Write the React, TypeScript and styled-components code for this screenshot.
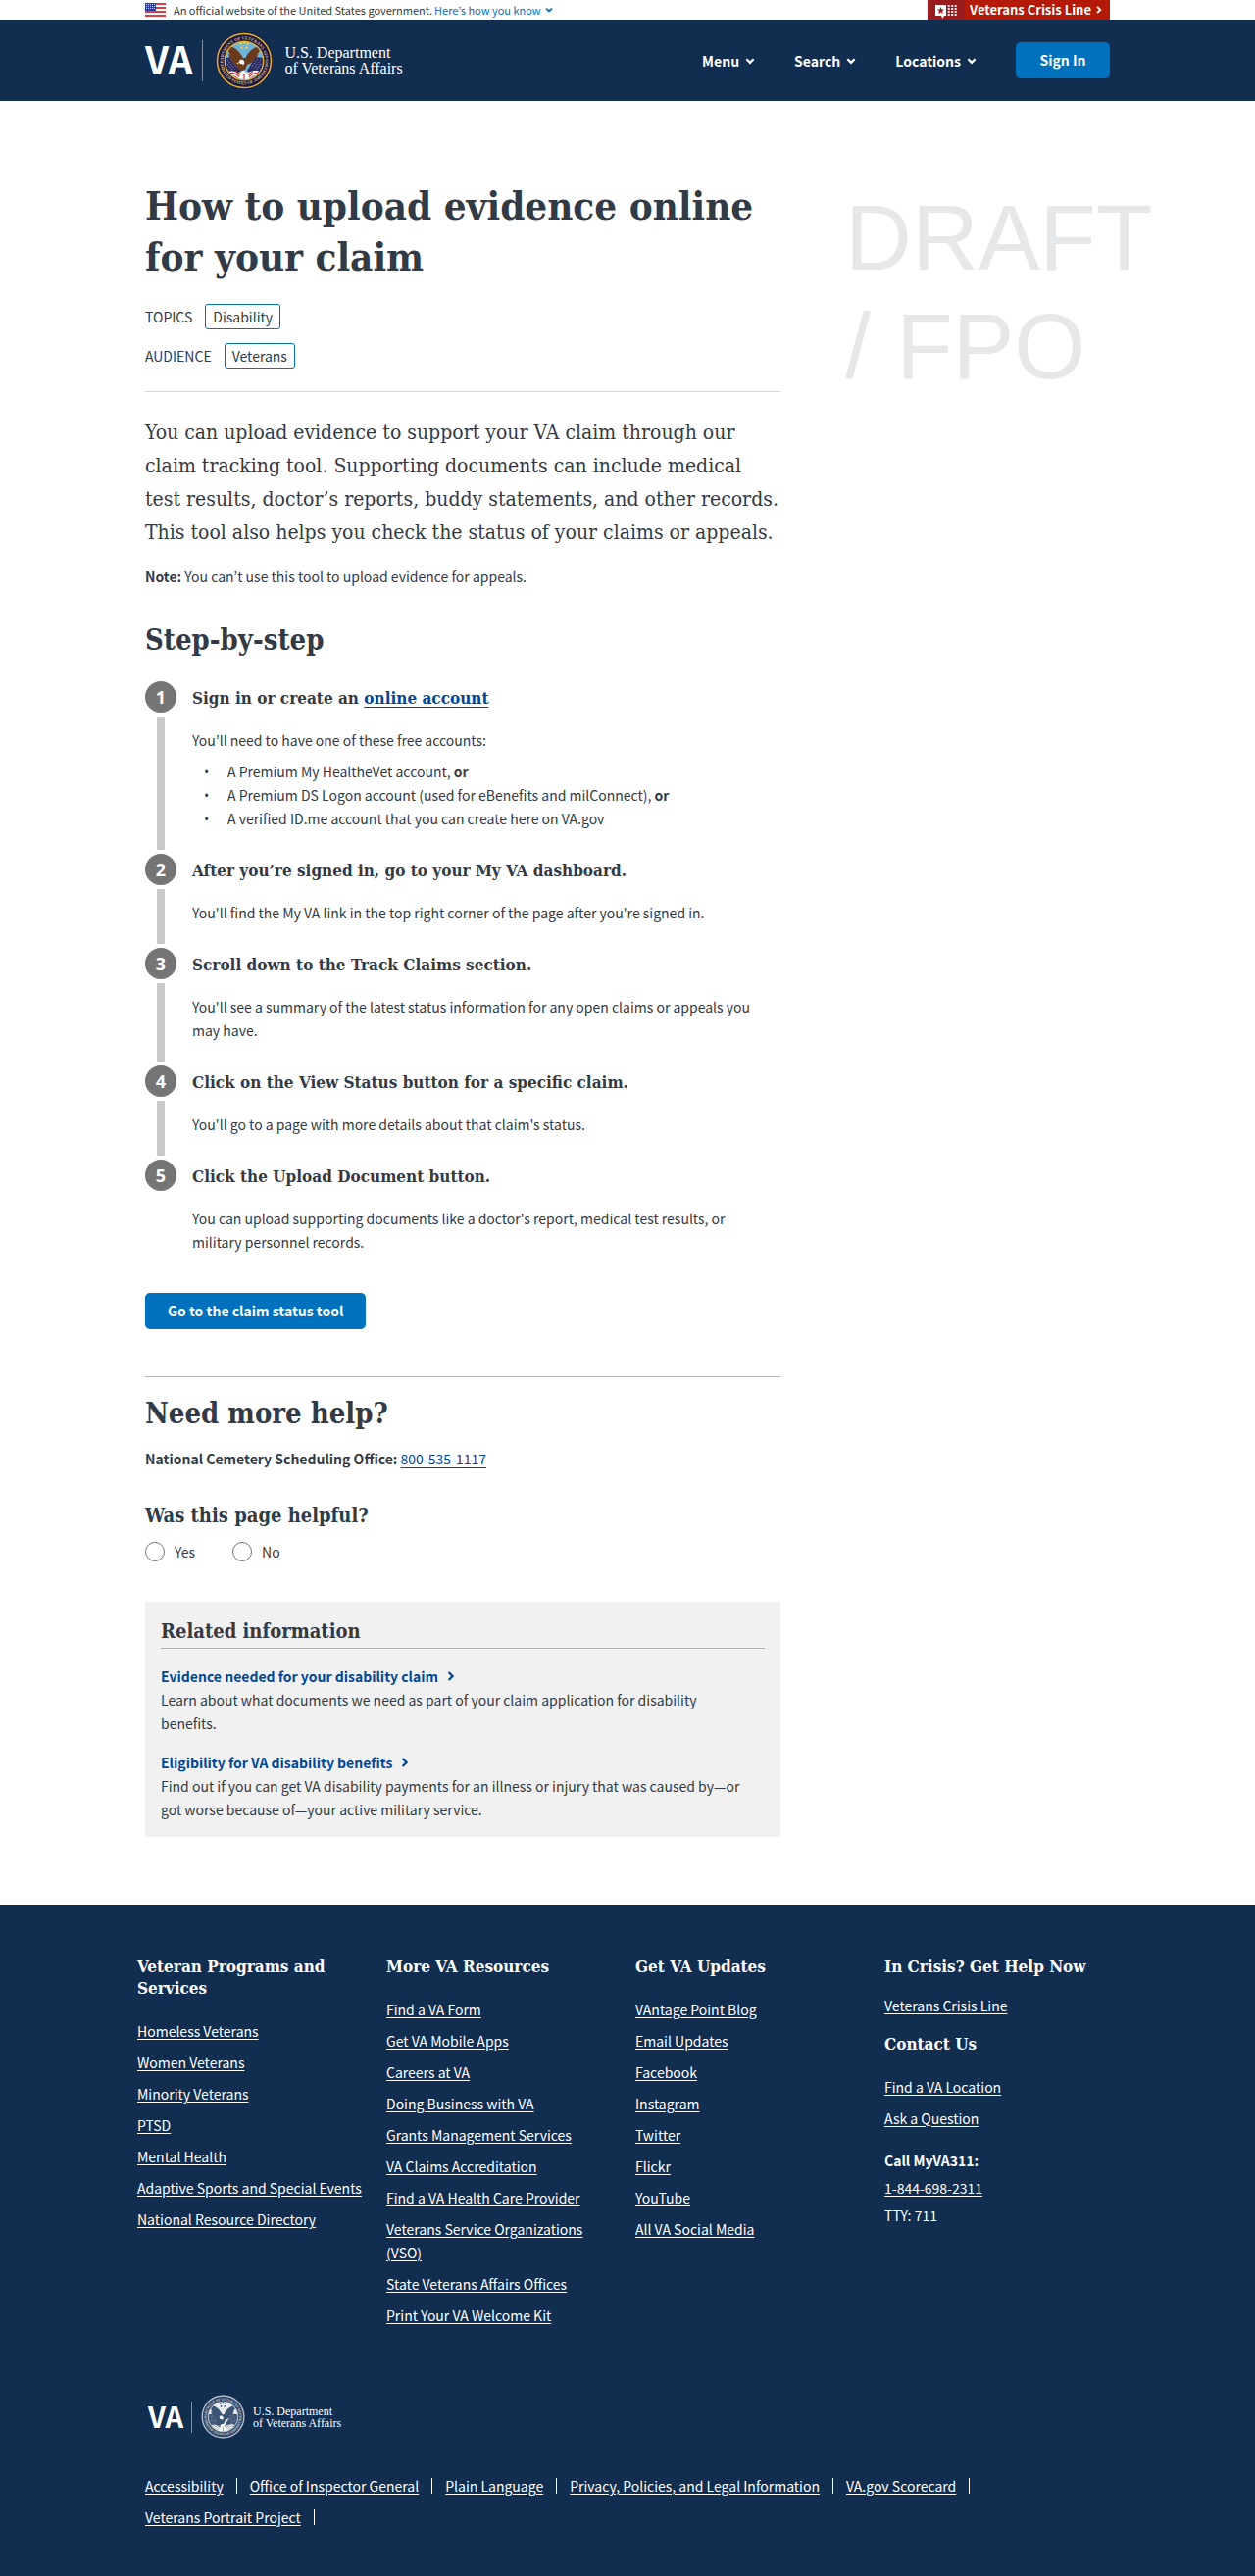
import React from "react";
import styled, { createGlobalStyle } from "styled-components";

const sans = `"Noto Sans CJK KR", "Open Sans", sans-serif`;
const slab = `"DejaVu Serif Condensed", "DejaVu Serif", serif`;
const navy = "#112e51";
const ink = "#323a45";
const blue = "#0071bc";
const linkBlue = "#004795";

const GlobalStyle = createGlobalStyle`
  *, *::before, *::after { box-sizing: border-box; }
  body {
    margin: 0;
    background: #fff;
    color: ${ink};
    font: 14px/24px ${sans};
  }
  h1, h2, h3, p, ul, ol, fieldset { margin: 0; padding: 0; border: 0; }
  ul, ol { list-style: none; }
  button { font-family: inherit; cursor: pointer; }
`;

const Container = styled.div`
  max-width: 1024px;
  margin: 0 auto;
  padding: 0 20px;
`;

/* ---------- government banner ---------- */

const Banner = styled(Container)`
  display: flex;
  justify-content: space-between;
  height: 20px;
`;

const Official = styled.div`
  display: flex;
  align-items: center;
  font-size: 11px;
  line-height: 20px;
`;

const Flag = styled.svg`
  width: 21px;
  height: 14px;
  margin-right: 8px;
`;

const HowLink = styled.button`
  display: flex;
  align-items: center;
  gap: 4px;
  margin-left: 2px;
  padding: 0;
  border: 0;
  background: none;
  color: ${blue};
  font-size: 11px;
  line-height: 20px;
`;

const CrisisLink = styled.a`
  display: flex;
  background: #b31a08;
  color: #fff;
  font-size: 13px;
  font-weight: 700;
  line-height: 20px;
  text-decoration: none;
`;

const CrisisIcon = styled.span`
  display: flex;
  width: 38px;
  justify-content: center;
  background: #981b1e;
`;

const CrisisText = styled.span`
  display: flex;
  align-items: center;
  gap: 4px;
  padding: 0 7px 0 5px;
`;

/* ---------- header ---------- */

const Header = styled.header`
  background: ${navy};
  color: #fff;
`;

const HeaderRow = styled(Container)`
  display: flex;
  align-items: center;
  justify-content: space-between;
  height: 83px;
`;

const Logo = styled.a<{ $small?: boolean }>`
  display: flex;
  align-items: center;
  color: #fff;
  text-decoration: none;
  padding-left: ${(p) => (p.$small ? 3 : 0)}px;
`;

const Initials = styled.span<{ $small?: boolean }>`
  padding-bottom: ${(p) => (p.$small ? 4 : 6)}px;
  font-size: ${(p) => (p.$small ? 29 : 39)}px;
  line-height: ${(p) => (p.$small ? 40 : 52)}px;
  font-weight: 700;
`;

const Divider = styled.span<{ $small?: boolean }>`
  width: 1px;
  height: ${(p) => (p.$small ? 32 : 42)}px;
  margin: ${(p) => (p.$small ? "0 9px 0 8px" : "0 13px 0 10px")};
  background: #7f8fa4;
`;

const Department = styled.span<{ $small?: boolean }>`
  margin-left: ${(p) => (p.$small ? 8 : 12)}px;
  font-family: "Liberation Serif", serif;
  font-size: ${(p) => (p.$small ? 12 : 16)}px;
  line-height: ${(p) => (p.$small ? 12 : 16)}px;
`;

const Nav = styled.nav`
  display: flex;
  align-items: center;
  gap: 40px;
`;

const NavButton = styled.button`
  display: flex;
  align-items: center;
  gap: 6px;
  padding: 0;
  border: 0;
  background: none;
  color: #fff;
  font-size: 14px;
  font-weight: 700;
  line-height: 24px;
`;

const PrimaryButton = styled.button`
  min-width: 96px;
  padding: 0 23px;
  border: 0;
  border-radius: 5px;
  background: ${blue};
  color: #fff;
  font-size: 14px;
  font-weight: 700;
  line-height: 37px;
`;

/* ---------- article ---------- */

const Layout = styled(Container)`
  display: grid;
  grid-template-columns: 12fr 5fr;
  column-gap: 66px;
  padding-top: 81px;
  padding-bottom: 69px;
`;

const Article = styled.main`
  min-width: 0;
`;

const Watermark = styled.aside`
  min-width: 0;
  padding-top: 3px;
  color: #e6e7e9;
  font: 94px/111px "Liberation Sans", sans-serif;
`;

const Title = styled.h1`
  margin-bottom: 22px;
  font: 700 40px/52px ${slab};
`;

const TagRow = styled.div`
  display: flex;
  align-items: center;
  gap: 13px;
  height: 26px;

  & + & {
    margin-top: 14px;
  }
`;

const Tag = styled.a`
  padding: 0 7px;
  border: 1px solid ${blue};
  border-radius: 3px;
  color: ${ink};
  text-decoration: none;
`;

const Rule = styled.hr<{ $dark?: boolean }>`
  height: 1px;
  margin: ${(p) => (p.$dark ? "48px 0 17px" : "23px 0 24px")};
  border: 0;
  background: ${(p) => (p.$dark ? "#aeb0b5" : "#d6d7d9")};
`;

const Intro = styled.p`
  margin-bottom: 16px;
  font: 21px/34px ${slab};
`;

const Section = styled.h2`
  font: 700 29px/40px ${slab};
`;

const StepsHeading = styled(Section)`
  margin-top: 33px;
`;

const SmallHeading = styled.h3`
  font: 700 20px/28px ${slab};
`;

const InlineLink = styled.a`
  color: ${linkBlue};
  text-underline-offset: 3px;
`;

const Steps = styled.ol`
  margin: 22px 0 16px;
`;

const Step = styled.li`
  display: grid;
  grid-template-columns: 32px 1fr;
  column-gap: 16px;
`;

const Marker = styled.div`
  display: flex;
  flex-direction: column;
  align-items: center;
`;

const StepNumber = styled.span`
  width: 32px;
  border-radius: 50%;
  background: #757575;
  color: #fff;
  font: 700 18px/32px "Open Sans", sans-serif;
  text-align: center;
`;

const Track = styled.span`
  flex: 1;
  width: 8px;
  margin: 4px 0;
  background: #cacaca;
`;

const StepTitle = styled.h3`
  margin-bottom: 14px;
  font: 700 17px/34px ${slab};
`;

const StepBody = styled.div`
  padding: 0 10px 24px 0;
`;

const Bullets = styled.ul`
  margin-top: 8px;
  padding-left: 36px;

  li::before {
    content: "•";
    display: inline-block;
    width: 24px;
    margin-left: -24px;
    font-family: "Open Sans", sans-serif;
    line-height: 20px;
  }
`;

const HelpPara = styled.p`
  margin: 14px 0 32px;
`;

const Choices = styled.fieldset`
  display: flex;
  gap: 38px;
  margin-top: 11px;
`;

const Choice = styled.label`
  display: flex;
  align-items: center;
  gap: 10px;
`;

const Radio = styled.input`
  appearance: none;
  width: 20px;
  height: 20px;
  margin: 0;
  border: 1px solid #757575;
  border-radius: 50%;
  background: #fff;

  &:checked {
    background: ${blue};
    box-shadow: inset 0 0 0 3px #fff;
  }
`;

const Related = styled.section`
  margin-top: 39px;
  padding: 16px;
  background: #f1f1f1;
`;

const RelatedHeading = styled(SmallHeading)`
  padding-bottom: 3px;
  border-bottom: 1px solid #aeb0b5;
`;

const RelatedItem = styled.div`
  margin-top: 16px;
  padding-right: 16px;
`;

const RelatedLink = styled.a`
  display: flex;
  align-items: center;
  gap: 8px;
  color: ${linkBlue};
  font-weight: 700;
  text-decoration: none;
`;

/* ---------- footer ---------- */

const Footer = styled.footer`
  padding: 52px 0 48px;
  background: ${navy};
  color: #fff;
`;

const FooterGrid = styled.div`
  display: grid;
  grid-template-columns: repeat(4, 1fr);
  margin: 0 -24px 0 -8px;
`;

const FooterColumn = styled.div`
  padding-right: 16px;
`;

const FooterHeading = styled.h2`
  margin-bottom: 21px;
  font: 700 17px/22px ${slab};

  p + & {
    margin-top: 16px;
  }
`;

const FooterLinks = styled.ul`
  display: grid;
  gap: 8px;
`;

const FooterLink = styled.a`
  color: #fff;
  text-underline-offset: 2px;
`;

const CrisisPara = styled.p`
  margin-top: -4px;
`;

const Phone = styled.div`
  display: grid;
  margin-top: 17px;
  line-height: 28px;
`;

const FooterBrand = styled.div`
  display: flex;
  margin-top: 69px;
`;

const LegalLinks = styled.ul`
  display: flex;
  flex-wrap: wrap;
  row-gap: 8px;
  max-width: 900px;
  margin-top: 36px;

  li {
    display: flex;
    align-items: center;
  }
  li::after {
    content: "";
    width: 1px;
    height: 16px;
    margin: 0 13px;
    background: #fff;
  }
`;

/* ---------- drawings ---------- */

const ChevronDown = ({ size }: { size: number }) => (
  <svg width={size} height={size} viewBox="0 0 10 10" aria-hidden="true">
    <path d="M1.400 3.200L5 6.800l3.600-3.600" fill="none" stroke="currentColor" strokeWidth="2.300" />
  </svg>
);

const ChevronRight = ({ size }: { size: number }) => (
  <svg width={size} height={size} viewBox="0 0 10 10" aria-hidden="true">
    <path d="M2.600 1L6.600 5l-4 4" fill="none" stroke="currentColor" strokeWidth="2.300" />
  </svg>
);

const UsFlag = () => (
  <Flag viewBox="0 0 21 14" aria-hidden="true">
    <rect width="21" height="14" fill="#fff" />
    {[0, 4, 8, 12].map((y) => (
      <rect key={y} y={y} width="21" height="2" fill="#db3e42" />
    ))}
    <rect width="11" height="8" fill="#2c3e9e" />
    {[1, 3, 5].map((y) =>
      [1, 3, 5, 7, 9].map((x) => (
        <rect key={`${x}-${y}`} x={x} y={y} width="1" height="1" fill="#c3cbef" />
      ))
    )}
  </Flag>
);

const CrisisMark = () => (
  <svg width="23" height="20" viewBox="0 0 23 20" aria-hidden="true">
    <path fill="#fff" d="M0 5h11v11l-2 0-1.500 3-1.500-3H0z" />
    <path
      fill="#981b1e"
      d="M5.500 7l1 2.600h2.700l-2.200 1.700.8 2.700-2.300-1.600L3.200 14l.8-2.700L1.800 9.600h2.700z"
    />
    {[5, 8, 11, 14].map((y) =>
      [12.500, 16, 19.500].map((x) => (
        <rect key={`${x}-${y}`} x={x} y={y} width="2.400" height="2" rx="1" fill="#fff" />
      ))
    )}
  </svg>
);

const SealSvg = styled.svg`
  flex: none;
  overflow: visible;
`;

type SealProps = { id: string; size: number; mono?: boolean };

const Seal = ({ id, size, mono }: SealProps) => {
  const c = mono
    ? { rim: "#b9c4d2", ring: "#31496a", text: "#c9d2dd", sky: "#e9edf2", bird: "#3c5473", head: "#fff", red: "#8a99ad", field: "#3c5473", star: "#31496a" }
    : { rim: "#e6b42c", ring: "#1c1746", text: "#d9bd6a", sky: "#6fb4d8", bird: "#6b3a1c", head: "#fff", red: "#c03a4c", field: "#2a2b63", star: "#f2d14a" };
  return (
    <SealSvg width={size} height={size} viewBox="0 0 116 116" role="img" aria-label="Seal">
      <defs>
        <path id={`${id}-top`} d="M22.600 82.500A43 43 0 1 1 93.400 82.500" />
        <path id={`${id}-bottom`} d="M11.500 75A50 50 0 0 0 104.500 75" />
        <clipPath id={`${id}-disc`}>
          <circle cx="58" cy="58" r="38" />
        </clipPath>
      </defs>
      <circle cx="58" cy="58" r="58" fill={c.ring} />
      <circle cx="58" cy="58" r="55" fill="none" stroke={c.rim} strokeWidth="3" />
      <circle cx="58" cy="58" r="39.500" fill={c.sky} stroke={c.rim} strokeWidth="2.500" />
      <g fill={c.text} fontFamily="Liberation Serif, serif" fontWeight="700" fontSize="9">
        <text textAnchor="middle">
          <textPath href={`#${id}-top`} startOffset="50%">DEPARTMENT OF VETERANS AFFAIRS</textPath>
        </text>
        <text textAnchor="middle">
          <textPath href={`#${id}-bottom`} startOffset="50%">UNITED STATES OF AMERICA</textPath>
        </text>
      </g>
      <g clipPath={`url(#${id}-disc)`}>
        <path fill={c.field} d="M19 52l16-2 17 28-14 12-20-14zM97 52l-16-2-17 28 14 12 20-14z" />
        <g stroke={c.head} strokeWidth="1.500" strokeDasharray="1.500 3">
          <path d="M25 57l14 18M31 55l13 17M24 64l10 13M91 57L77 75M85 55L72 72M92 64L82 77" />
        </g>
        <path fill={c.head} d="M26 80c10-2 16 0 22 5l8-9 8 8c8-6 14-7 24-5L78 96H40z" />
        <g stroke={c.red} strokeWidth="2.500" fill="none">
          <path d="M28 83c9-2 14 1 20 8M33 89c6 0 9 2 13 6M88 83c-9-2-14 1-20 8M83 89c-6 0-9 2-13 6M40 79l10 8M76 79l-10 8M58 84v12" />
        </g>
        <path
          fill={c.bird}
          d="M27 29c8 0 18 5 25 17l4 6h5c5-13 16-22 31-24-1 8-3 13-8 17l3-1c-3 7-7 11-12 13l3 0c-5 6-9 8-13 8l-5 11-8 3-7-5-2-9c-5 0-9-4-12-9l4 1c-5-4-8-8-9-13l4 2c-4-6-5-11-3-17z"
        />
        <path fill={c.head} d="M48 59c1-4 6-5 9-2l2 5-3 5-2-3c-3 1-6 0-6-5z" />
        <path fill={c.star} d="M46 60l-3 3 1 2 4-3zM50 80l-3 5h4zM63 79l3 5h-4z" />
      </g>
      <g fill={c.star}>
        {[[51, 23], [58, 21], [65, 23], [53, 31], [63, 31]].map(([x, y]) => (
          <path
            key={`${x}-${y}`}
            transform={`translate(${x} ${y})`}
            d="M0-3.500l1 2.400h2.500L1.500.5l.8 2.500L0 1.500-2.300 3l.8-2.500-2-1.600H-1z"
          />
        ))}
      </g>
    </SealSvg>
  );
};

const Brand = ({ small }: { small?: boolean }) => (
  <Logo href="#home" $small={small}>
    <Initials $small={small}>VA</Initials>
    <Divider $small={small} />
    <Seal id={small ? "footer-seal" : "header-seal"} size={small ? 45 : 58} mono={small} />
    <Department $small={small}>
      U.S. Department
      <br />
      of Veterans Affairs
    </Department>
  </Logo>
);

/* ---------- content ---------- */

const steps: { title: React.ReactNode; body: React.ReactNode }[] = [
  {
    title: (
      <>
        Sign in or create an <InlineLink href="#account">online account</InlineLink>
      </>
    ),
    body: (
      <>
        <p>You’ll need to have one of these free accounts:</p>
        <Bullets>
          <li>A Premium My HealtheVet account, <b>or</b></li>
          <li>A Premium DS Logon account (used for eBenefits and milConnect), <b>or</b></li>
          <li>A verified ID.me account that you can create here on VA.gov</li>
        </Bullets>
      </>
    ),
  },
  {
    title: "After you’re signed in, go to your My VA dashboard.",
    body: <p>You'll find the My VA link in the top right corner of the page after you're signed in.</p>,
  },
  {
    title: "Scroll down to the Track Claims section.",
    body: <p>You'll see a summary of the latest status information for any open claims or appeals you may have.</p>,
  },
  {
    title: "Click on the View Status button for a specific claim.",
    body: <p>You'll go to a page with more details about that claim's status.</p>,
  },
  {
    title: "Click the Upload Document button.",
    body: <p>You can upload supporting documents like a doctor's report, medical test results, or military personnel records.</p>,
  },
];

const related = [
  {
    title: "Evidence needed for your disability claim",
    text: "Learn about what documents we need as part of your claim application for disability benefits.",
  },
  {
    title: "Eligibility for VA disability benefits",
    text: "Find out if you can get VA disability payments for an illness or injury that was caused by—or got worse because of—your active military service.",
  },
];

const footerColumns = [
  {
    heading: "Veteran Programs and Services",
    links: ["Homeless Veterans", "Women Veterans", "Minority Veterans", "PTSD", "Mental Health", "Adaptive Sports and Special Events", "National Resource Directory"],
  },
  {
    heading: "More VA Resources",
    links: ["Find a VA Form", "Get VA Mobile Apps", "Careers at VA", "Doing Business with VA", "Grants Management Services", "VA Claims Accreditation", "Find a VA Health Care Provider", "Veterans Service Organizations (VSO)", "State Veterans Affairs Offices", "Print Your VA Welcome Kit"],
  },
  {
    heading: "Get VA Updates",
    links: ["VAntage Point Blog", "Email Updates", "Facebook", "Instagram", "Twitter", "Flickr", "YouTube", "All VA Social Media"],
  },
];

const legal = ["Accessibility", "Office of Inspector General", "Plain Language", "Privacy, Policies, and Legal Information", "VA.gov Scorecard", "Veterans Portrait Project"];

const LinkList = ({ links }: { links: string[] }) => (
  <FooterLinks>
    {links.map((label) => (
      <li key={label}>
        <FooterLink href="#footer">{label}</FooterLink>
      </li>
    ))}
  </FooterLinks>
);

export default function App() {
  return (
    <>
      <GlobalStyle />
      <Banner>
        <Official>
          <UsFlag />
          An official website of the United States government.
          <HowLink type="button">
            Here’s how you know <ChevronDown size={8} />
          </HowLink>
        </Official>
        <CrisisLink href="#crisis">
          <CrisisIcon><CrisisMark /></CrisisIcon>
          <CrisisText>
            Veterans Crisis Line <ChevronRight size={8} />
          </CrisisText>
        </CrisisLink>
      </Banner>

      <Header>
        <HeaderRow>
          <Brand />
          <Nav aria-label="Main">
            {["Menu", "Search", "Locations"].map((label) => (
              <NavButton key={label} type="button">
                {label} <ChevronDown size={10} />
              </NavButton>
            ))}
            <PrimaryButton type="button">Sign In</PrimaryButton>
          </Nav>
        </HeaderRow>
      </Header>

      <Layout>
        <Article>
          <Title>How to upload evidence online for your claim</Title>
          <TagRow>TOPICS <Tag href="#disability">Disability</Tag></TagRow>
          <TagRow>AUDIENCE <Tag href="#veterans">Veterans</Tag></TagRow>
          <Rule />
          <Intro>
            You can upload evidence to support your VA claim through our claim tracking tool.
            Supporting documents can include medical test results, doctor’s reports, buddy
            statements, and other records. This tool also helps you check the status of your
            claims or appeals.
          </Intro>
          <p><b>Note:</b> You can’t use this tool to upload evidence for appeals.</p>
          <StepsHeading>Step-by-step</StepsHeading>
          <Steps>
            {steps.map((step, i) => (
              <Step key={i}>
                <Marker>
                  <StepNumber>{i + 1}</StepNumber>
                  {i < steps.length - 1 && <Track />}
                </Marker>
                <StepBody>
                  <StepTitle>{step.title}</StepTitle>
                  {step.body}
                </StepBody>
              </Step>
            ))}
          </Steps>
          <PrimaryButton type="button">Go to the claim status tool</PrimaryButton>
          <Rule $dark />
          <Section>Need more help?</Section>
          <HelpPara>
            <b>National Cemetery Scheduling Office:</b>{" "}
            <InlineLink href="tel:800-535-1117">800-535-1117</InlineLink>
          </HelpPara>
          <SmallHeading id="helpful">Was this page helpful?</SmallHeading>
          <Choices aria-labelledby="helpful">
            <Choice><Radio type="radio" name="helpful" value="yes" />Yes</Choice>
            <Choice><Radio type="radio" name="helpful" value="no" />No</Choice>
          </Choices>
          <Related>
            <RelatedHeading>Related information</RelatedHeading>
            {related.map((item) => (
              <RelatedItem key={item.title}>
                <RelatedLink href="#related">{item.title} <ChevronRight size={10} /></RelatedLink>
                <p>{item.text}</p>
              </RelatedItem>
            ))}
          </Related>
        </Article>
        <Watermark>DRAFT / FPO</Watermark>
      </Layout>

      <Footer>
        <Container>
          <FooterGrid>
            {footerColumns.map((col) => (
              <FooterColumn key={col.heading}>
                <FooterHeading>{col.heading}</FooterHeading>
                <LinkList links={col.links} />
              </FooterColumn>
            ))}
            <FooterColumn>
              <FooterHeading>In Crisis? Get Help Now</FooterHeading>
              <CrisisPara><FooterLink href="#crisis">Veterans Crisis Line</FooterLink></CrisisPara>
              <FooterHeading>Contact Us</FooterHeading>
              <LinkList links={["Find a VA Location", "Ask a Question"]} />
              <Phone>
                <b>Call MyVA311:</b>
                <span><FooterLink href="tel:1-844-698-2311">1-844-698-2311</FooterLink></span>
                <span>TTY: 711</span>
              </Phone>
            </FooterColumn>
          </FooterGrid>
          <FooterBrand><Brand small /></FooterBrand>
          <LegalLinks>
            {legal.map((label) => (
              <li key={label}><FooterLink href="#legal">{label}</FooterLink></li>
            ))}
          </LegalLinks>
        </Container>
      </Footer>
    </>
  );
}
